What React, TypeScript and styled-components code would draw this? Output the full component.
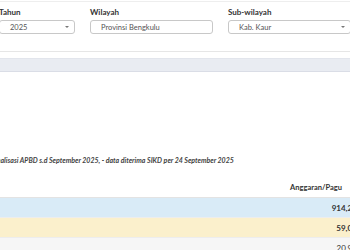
import React from 'react';
import styled, { createGlobalStyle } from 'styled-components';

const GlobalStyle = createGlobalStyle`
  html, body {
    margin: 0;
    padding: 0;
    background: #ffffff;
    overflow: hidden;
  }
  body {
    font-family: Lato, "Open Sans", sans-serif;
    color: #333;
  }
`;

const filters = [
  { label: 'Tahun', value: '2025', caret: true },
  { label: 'Wilayah', value: 'Provinsi Bengkulu', caret: false },
  { label: 'Sub-wilayah', value: 'Kab. Kaur', caret: true },
];

const rows = [
  { value: '914,286,351,222', tone: 'blue', bold: true },
  { value: '59,041,728,510', tone: 'yellow', bold: true },
  { value: '20,913,644,075', tone: 'gray', bold: false },
];

export default function App() {
  return (
    <>
      <GlobalStyle />
      <Page>
        <FilterCard>
          {filters.map((f) => (
            <Field key={f.label}>
              <Label>{f.label}</Label>
              <Select>
                <span>{f.value}</span>
                {f.caret && <Caret />}
              </Select>
            </Field>
          ))}
        </FilterCard>
        <Band />
        <ChartArea />
        <Caption>
          Realisasi APBD s.d September 2025, - data diterima SIKD per 24 September 2025
        </Caption>
        <Table>
          <HeadRow>
            <HeadCell>Anggaran/Pagu</HeadCell>
          </HeadRow>
          {rows.map((r) => (
            <Row key={r.value} $tone={r.tone}>
              <Cell $bold={r.bold}>{r.value}</Cell>
            </Row>
          ))}
        </Table>
      </Page>
    </>
  );
}

const Page = styled.div`
  width: 520px;
  margin-left: -60px;
`;

const FilterCard = styled.div`
  display: grid;
  grid-template-columns: 76px 123px 123px;
  column-gap: 15px;
  padding: 6px 0 17px 59px;
  margin-top: 1px;
  border-top: 1px solid #eeeeee;
  border-bottom: 1px solid #e6e6e6;
`;

const Field = styled.div`
  display: flex;
  flex-direction: column;
  gap: 3px;
`;

const Label = styled.label`
  font-size: 8px;
  font-weight: 700;
  color: #333;
  line-height: 9px;
`;

const Select = styled.div`
  position: relative;
  height: 14px;
  box-sizing: border-box;
  border: 1px solid #c8c8c8;
  border-radius: 3px;
  padding: 0 10px;
  display: flex;
  align-items: center;
  font-size: 7.5px;
  color: #555;
  overflow: hidden;
  white-space: nowrap;
`;

const Caret = styled.i`
  position: absolute;
  right: 5px;
  top: 5px;
  width: 0;
  height: 0;
  border-left: 2px solid transparent;
  border-right: 2px solid transparent;
  border-top: 2px solid #777;
`;

const Band = styled.div`
  margin-top: 6px;
  height: 12px;
  background: #e9ecf2;
  border-top: 1px solid #e2e5ec;
  border-bottom: 1px solid #dadde6;
`;

const ChartArea = styled.div`
  height: 84px;
`;

const Caption = styled.p`
  margin: 0;
  padding-left: 53px;
  font-size: 7px;
  font-style: italic;
  font-weight: 700;
  color: #444;
  white-space: nowrap;
`;

const Table = styled.div`
  margin-top: 13px;
`;

const HeadRow = styled.div`
  display: flex;
  justify-content: flex-end;
  height: 20px;
  align-items: center;
  border-bottom: 1px solid #e3e3e3;
`;

const HeadCell = styled.div`
  padding-right: 118px;
  text-align: right;
  font-size: 7.5px;
  font-weight: 700;
  color: #333;
`;

const toneColors: Record<string, string> = {
  blue: '#d9ebf7',
  yellow: '#fbf0cc',
  gray: '#f6f6f6',
};

const Row = styled.div<{ $tone: string }>`
  display: flex;
  justify-content: flex-end;
  height: 19px;
  align-items: center;
  background: ${(p) => toneColors[p.$tone]};
  border-bottom: 1px solid #ededed;
`;

const Cell = styled.div<{ $bold: boolean }>`
  width: 110px;
  padding-right: 67px;
  text-align: right;
  font-size: 8px;
  font-weight: ${(p) => (p.$bold ? 700 : 400)};
  color: #333;
  white-space: nowrap;
`;
